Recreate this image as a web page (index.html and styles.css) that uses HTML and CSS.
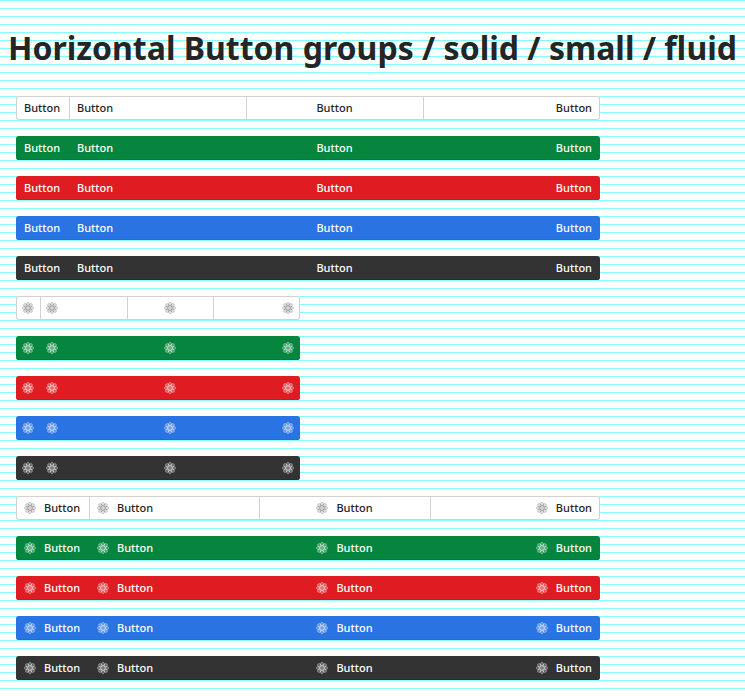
FILE: index.html
```
<!DOCTYPE html>
<html lang="en">
<head>
<meta charset="utf-8">
<title>Horizontal Button groups</title>
<link rel="stylesheet" href="styles.css">
</head>
<body>
<h1>Horizontal Button groups / solid / small / fluid</h1>
<main id="groups"></main>
<script src="script.js"></script>
</body>
</html>
```
FILE: styles.css
```
* { box-sizing: border-box; }
html { background: #fff; }
body {
  margin: 0;
  height: 696px;
  overflow: hidden;
  font-family: "Noto Sans", sans-serif;
  color: #252525;
  background: repeating-linear-gradient(to bottom, #80ffff 0, #80ffff 1px, #fff 1px, #fff 8px);
}
h1 {
  margin: 0;
  padding-top: 24px;
  height: 96px;
  font-size: 32px;
  line-height: 48px;
  font-weight: 700;
  text-align: center;
  white-space: nowrap;
}
main {
  display: flex;
  flex-direction: column;
  gap: 16px;
  padding-left: 16px;
}
.group {
  display: grid;
  width: 584px;
  height: 24px;
  border-radius: 3px;
  overflow: hidden;
  color: #fff;
}
.group.text { grid-template-columns: 53px 177px 177px 177px; }
.group.icon { grid-template-columns: 24px 87px 86px 87px; width: 284px; }
.group.both { grid-template-columns: 73px 170px 171px 170px; }
.button {
  display: flex;
  align-items: center;
  gap: 8px;
  padding: 0 8px;
  font-size: 11px;
  line-height: 16px;
  font-weight: 500;
}
.icon .button { padding: 0 6px; }
.button:nth-child(3) { justify-content: center; }
.button:nth-child(4) { justify-content: flex-end; }
.button svg { width: 12px; height: 12px; flex: none; }
.green { background: #05853e; box-shadow: inset 0 -1px #047b39; }
.red { background: #de1c22; box-shadow: inset 0 -1px #d0181e; }
.blue { background: #2a73e2; box-shadow: inset 0 -1px #266bd5; }
.dark { background: #333; box-shadow: inset 0 -1px #2c2c2c; }
.white { background: #fff; color: #252525; box-shadow: inset 0 0 0 1px #d1d1d1; }
.white .button + .button { border-left: 1px solid #d1d1d1; padding-left: 7px; }
.white.icon .button + .button { padding-left: 5px; }
.white svg { color: #858585; }
```
FILE: script.js
```
const icon = '<svg viewBox="0 0 12 12" fill="none" stroke="currentColor" stroke-width=".55">' +
  [0, 45, 90, 135].map(a => `<ellipse cx="6" cy="6" rx="5.6" ry="2" transform="rotate(${a} 6 6)"/>`).join('') +
  '<circle cx="6" cy="6" r=".7" fill="currentColor" stroke="none"/></svg>';
const contents = { text: '<span>Button</span>', icon: icon, both: icon + '<span>Button</span>' };
document.getElementById('groups').innerHTML = Object.keys(contents).map(kind =>
  ['white', 'green', 'red', 'blue', 'dark'].map(color =>
    `<div class="group ${kind} ${color}">${`<div class="button">${contents[kind]}</div>`.repeat(4)}</div>`
  ).join('')).join('');
```
